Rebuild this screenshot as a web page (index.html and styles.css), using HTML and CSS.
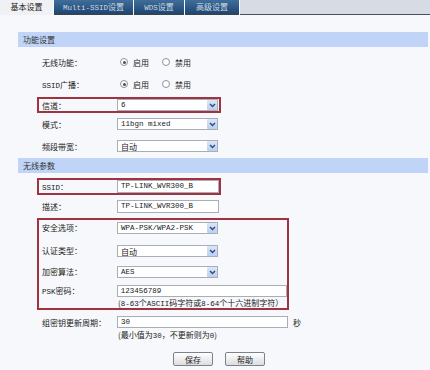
FILE: index.html
```html
<!DOCTYPE html>
<html lang="zh-CN">

<head>
    <meta charset="UTF-8">
    <meta name="viewport" content="width=device-width, initial-scale=1.0">
    <title>无线设置</title>
    <link rel="stylesheet" href="styles.css">
</head>

<body>
    <div class="tabs">
        <div class="tab active">基本设置</div>
        <div class="tab t2"><span class="mono">Multi-SSID</span>设置</div>
        <div class="tab t3"><span class="mono">WDS</span>设置</div>
        <div class="tab t4">高级设置</div>
        <div class="tab-fill"></div>
    </div>

    <div class="sec first">功能设置</div>
    <div class="form f1">
        <div class="row">
            <span class="lbl">无线功能：</span>
            <span class="radio"><i class="dot on"></i>启用</span>
            <span class="radio"><i class="dot"></i>禁用</span>
        </div>
        <div class="row">
            <span class="lbl"><span class="mono">SSID</span>广播：</span>
            <span class="radio"><i class="dot on"></i>启用</span>
            <span class="radio"><i class="dot"></i>禁用</span>
        </div>
        <div class="hl small ch">
            <div class="row tight">
                <span class="lbl">信道：</span>
                <span class="sel"><span class="val mono">6</span><span class="arr"><svg width="7" height="5" viewBox="0 0 7 5"><polyline points="1,1 3.5,3.5 6,1" /></svg></span></span>
            </div>
        </div>
        <div class="row">
            <span class="lbl">模式：</span>
            <span class="sel"><span class="val mono">11bgn mixed</span><span class="arr"><svg width="7" height="5" viewBox="0 0 7 5"><polyline points="1,1 3.5,3.5 6,1" /></svg></span></span>
        </div>
        <div class="row">
            <span class="lbl">频段带宽：</span>
            <span class="sel"><span class="val">自动</span><span class="arr"><svg width="7" height="5" viewBox="0 0 7 5"><polyline points="1,1 3.5,3.5 6,1" /></svg></span></span>
        </div>
    </div>

    <div class="sec">无线参数</div>
    <div class="form f2">
        <div class="hl small ssid">
            <div class="row tight">
                <span class="lbl"><span class="mono">SSID</span>：</span>
                <span class="inp mono">TP-LINK_WVR300_B</span>
            </div>
        </div>
        <div class="row">
            <span class="lbl">描述：</span>
            <span class="inp mono">TP-LINK_WVR300_B</span>
        </div>
        <div class="hl big">
            <div class="row top r1">
                <span class="lbl">安全选项：</span>
                <span class="sel"><span class="val mono">WPA-PSK/WPA2-PSK</span><span class="arr"><svg width="7" height="5" viewBox="0 0 7 5"><polyline points="1,1 3.5,3.5 6,1" /></svg></span></span>
            </div>
            <div class="row top r2">
                <span class="lbl">认证类型：</span>
                <span class="sel"><span class="val">自动</span><span class="arr"><svg width="7" height="5" viewBox="0 0 7 5"><polyline points="1,1 3.5,3.5 6,1" /></svg></span></span>
            </div>
            <div class="row top r3">
                <span class="lbl">加密算法：</span>
                <span class="sel"><span class="val mono">AES</span><span class="arr"><svg width="7" height="5" viewBox="0 0 7 5"><polyline points="1,1 3.5,3.5 6,1" /></svg></span></span>
            </div>
            <div class="row top r4">
                <span class="lbl"><span class="mono">PSK</span>密码：</span>
                <span class="inp wide mono">123456789</span>
            </div>
            <div class="hint in-box">(<span class="mono">8-63</span>个<span class="mono">ASCII</span>码字符或<span class="mono">8-64</span>个十六进制字符）</div>
        </div>
        <div class="row tight gk">
            <span class="lbl">组密钥更新周期：</span>
            <span class="inp wide mono">30</span>
            <span class="unit">秒</span>
        </div>
        <div class="hint">(最小值为<span class="mono">30</span>，不更新则为<span class="mono">0</span>)</div>
        <div class="btns">
            <button class="btn">保存</button>
            <button class="btn">帮助</button>
        </div>
    </div>
</body>

</html>
```

FILE: styles.css
```css
* {
    padding: 0;
    margin: 0;
    box-sizing: border-box;
}

body {
    background-color: #f7f8fb;
    font-family: "Noto Sans CJK SC", "DejaVu Sans", sans-serif;
    font-size: 8px;
    color: #1a1a1a;
}

.mono {
    font-family: "Liberation Mono", "Noto Sans CJK SC", monospace;
    font-size: 7.5px;
}

/* tabs */
.tabs {
    display: flex;
    height: 15px;
}

.tab {
    height: 15px;
    line-height: 14px;
    text-align: center;
    color: #cfd9e4;
    background: linear-gradient(#3f6e9a, #1d4670);
    border-bottom: 1px solid #3d4248;
    margin-right: 1px;
}

.tab.active {
    width: 53px;
    color: #222;
    background: #eff1f4;
    border-bottom: 1px solid #eff1f4;
}

.t2 {
    width: 79px;
}

.t3 {
    width: 50px;
}

.t4 {
    width: 54px;
}

.tab-fill {
    flex: 1;
    background-color: #d6dbe4;
    border-bottom: 1px solid #4a4f55;
}

/* section header */
.sec {
    margin: 1px 2px 0 18px;
    height: 15px;
    line-height: 15px;
    padding-left: 5px;
    background-color: #bfd4f7;
    color: #333;
}

.sec.first {
    margin-top: 17px;
}

.form {
    margin-left: 37px;
}

.f1 {
    margin-top: 4px;
}

.f2 {
    margin-top: 5px;
}

.row {
    display: flex;
    align-items: center;
    height: 22px;
    padding-left: 5px;
}

.hl .row {
    padding-left: 3px;
}

.row.top {
    align-items: flex-start;
    padding-top: 2px;
}

.r1 {
    height: 23px;
}

.r2 {
    height: 21px;
}

.r3 {
    height: 19px;
}

.r4 {
    height: 14px;
}

.lbl {
    width: 75px;
}

/* highlight boxes */
.hl {
    border: 2px solid #a1323f;
}

.hl.small {
    width: 184px;
}

.hl.ch {
    margin-top: 2px;
}

.ch .row {
    height: 12px;
}

.ssid .row {
    height: 13px;
}

.hl.big {
    width: 252px;
    margin-top: 1px;
}

/* radios */
.radio {
    display: flex;
    align-items: center;
    margin-right: 10px;
}

.dot {
    width: 8px;
    height: 8px;
    border: 1px solid #8d939b;
    border-radius: 50%;
    background-color: #fff;
    margin: 0 5px 0 3px;
    display: flex;
    align-items: center;
    justify-content: center;
}

.dot.on::after {
    content: "";
    width: 3px;
    height: 3px;
    border-radius: 50%;
    background-color: #3c5a3c;
}

/* selects and inputs */
.sel {
    width: 101px;
    height: 12px;
    border: 1px solid #a7aeb7;
    background-color: #fff;
    display: flex;
    align-items: center;
    padding-left: 3px;
}

.val {
    flex: 1;
}

.arr {
    width: 10px;
    height: 10px;
    background: linear-gradient(#dbe6f7, #bccfee);
    border-radius: 1px;
    display: flex;
    align-items: center;
    justify-content: center;
}

.arr svg polyline {
    fill: none;
    stroke: #2b4f8e;
    stroke-width: 1.5;
}

.inp {
    width: 102px;
    height: 13px;
    line-height: 11px;
    border: 1px solid #a7aeb7;
    background-color: #fff;
    padding-left: 3px;
}

.inp.wide {
    width: 171px;
    height: 12px;
    line-height: 10px;
}

.hint {
    height: 14px;
    line-height: 14px;
    margin-left: 81px;
    color: #222;
}

.hint.in-box {
    height: 11px;
    line-height: 11px;
    margin-left: 79px;
}

.gk {
    margin-top: 6px;
    height: 12px;
}

.unit {
    margin-left: 5px;
}

/* buttons */
.btns {
    display: flex;
    gap: 12px;
    margin: 10px 0 0 136px;
}

.btn {
    width: 40px;
    height: 14px;
    font-family: "Noto Sans CJK SC", sans-serif;
    font-size: 8px;
    color: #222;
    border: 1px solid #7d8288;
    border-radius: 2px;
    background: linear-gradient(#ffffff, #dcdde0);
}
```
